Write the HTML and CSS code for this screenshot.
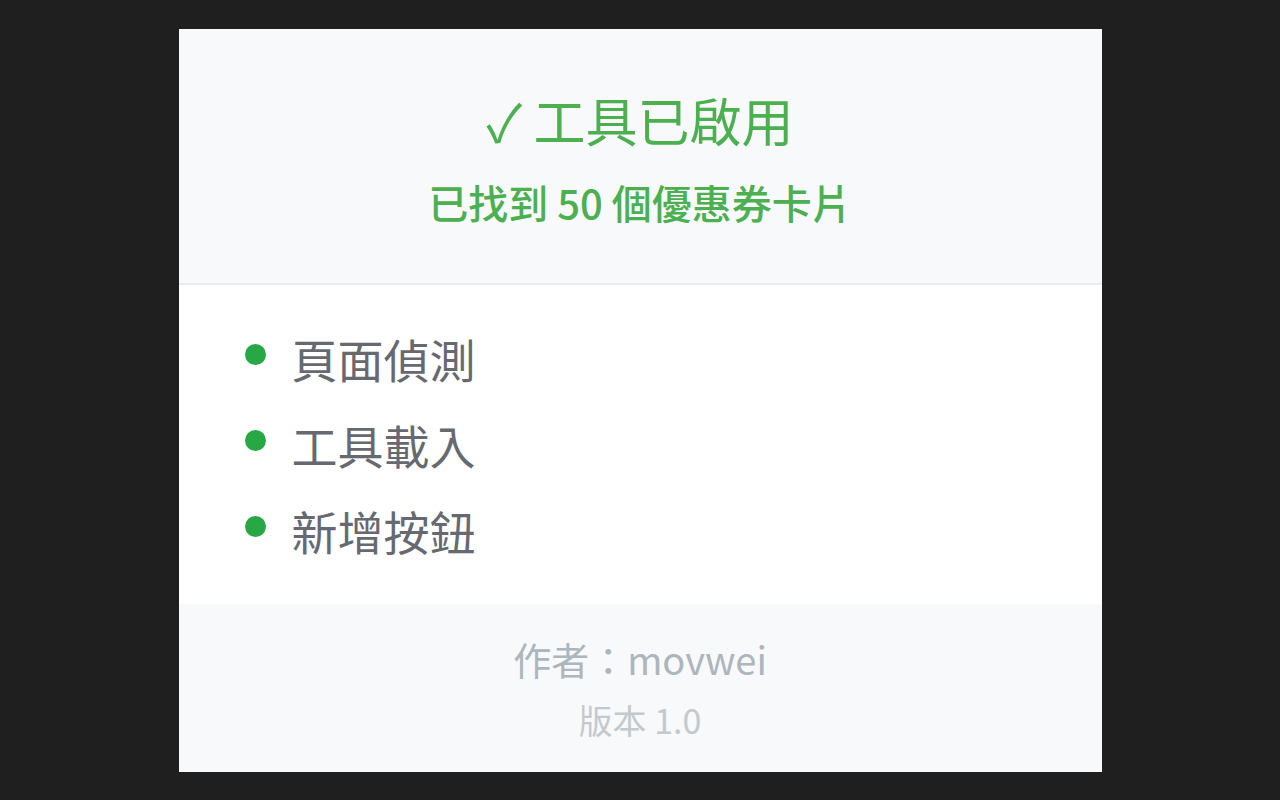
FILE: index.html
```html
<!DOCTYPE html>
<html lang="zh-Hant">
<head>
<meta charset="utf-8">
<title>工具已啟用</title>
<link rel="stylesheet" href="styles.css">
</head>
<body>
<div class="popup">
  <header class="head">
    <div class="title">✓ 工具已啟用</div>
    <div class="count">已找到 50 個優惠券卡片</div>
  </header>
  <ul class="steps">
    <li class="step"><span class="dot"></span><span>頁面偵測</span></li>
    <li class="step"><span class="dot"></span><span>工具載入</span></li>
    <li class="step"><span class="dot"></span><span>新增按鈕</span></li>
  </ul>
  <footer class="foot">
    <div class="author">作者：movwei</div>
    <div class="version">版本 1.0</div>
  </footer>
</div>
</body>
</html>
```

FILE: styles.css
```css
html, body {
  margin: 0;
  padding: 0;
}
body {
  background: #1f1f1f;
  height: 100vh;
  display: flex;
  align-items: center;
  justify-content: center;
  font-family: "Noto Sans CJK TC", "Noto Sans", sans-serif;
}
.popup {
  width: 923px;
  height: 743px;
  background: #ffffff;
  display: flex;
  flex-direction: column;
}
.head {
  background: #f8f9fa;
  border-bottom: 2px solid #e9ecef;
  height: 256px;
  box-sizing: border-box;
  display: flex;
  flex-direction: column;
  align-items: center;
  padding-top: 61px;
}
.title {
  font-size: 52px;
  line-height: 60px;
  color: #4caf50;
  font-weight: 400;
}
.count {
  margin-top: 22px;
  font-size: 40px;
  line-height: 60px;
  color: #4caf50;
  font-weight: 500;
}
.steps {
  list-style: none;
  margin: 0;
  padding: 30px 0 0 66px;
  flex: 1;
}
.step {
  display: flex;
  align-items: center;
  height: 86px;
  font-size: 46px;
  color: #666a70;
}
.dot {
  width: 21px;
  height: 21px;
  border-radius: 50%;
  background: #28a745;
  margin-right: 26px;
  flex: none;
  position: relative;
  top: -3px;
}
.foot {
  background: #f8f9fa;
  height: 168px;
  display: flex;
  flex-direction: column;
  align-items: center;
  padding-top: 30px;
  box-sizing: border-box;
}
.author {
  font-size: 38px;
  line-height: 50px;
  color: #adb5bd;
}
.version {
  margin-top: 15px;
  font-size: 34px;
  line-height: 42px;
  color: #c4c9ce;
}
```
